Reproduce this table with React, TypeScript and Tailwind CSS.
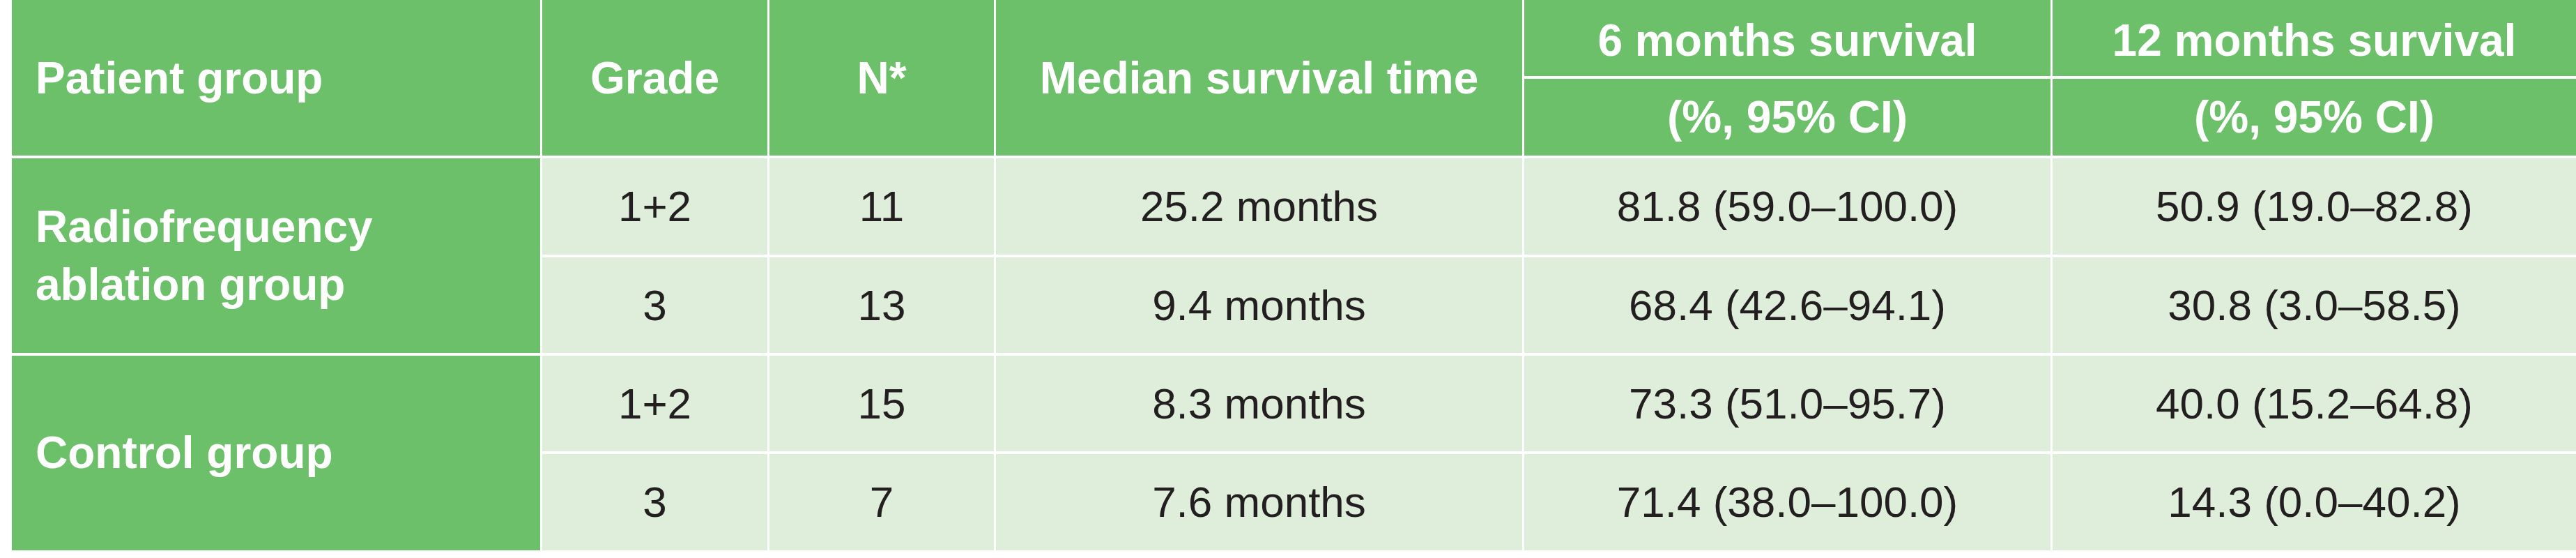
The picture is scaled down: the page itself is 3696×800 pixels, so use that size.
import React from "react";

const H = "bg-[#6cc06a] text-white font-bold flex items-center justify-center text-center";
const HL = "bg-[#6cc06a] text-white font-bold flex items-center pl-[34px]";
const B = "bg-[#dfeedb] text-[#231f20] flex items-center justify-center text-[62px]";

type Row = { grade: string; n: string; median: string; six: string; twelve: string };

const groups: { label: React.ReactNode; rows: Row[] }[] = [
  {
    label: (
      <>
        Radiofrequency
        <br />
        ablation group
      </>
    ),
    rows: [
      { grade: "1+2", n: "11", median: "25.2 months", six: "81.8 (59.0–100.0)", twelve: "50.9 (19.0–82.8)" },
      { grade: "3", n: "13", median: "9.4 months", six: "68.4 (42.6–94.1)", twelve: "30.8 (3.0–58.5)" },
    ],
  },
  {
    label: <>Control group</>,
    rows: [
      { grade: "1+2", n: "15", median: "8.3 months", six: "73.3 (51.0–95.7)", twelve: "40.0 (15.2–64.8)" },
      { grade: "3", n: "7", median: "7.6 months", six: "71.4 (38.0–100.0)", twelve: "14.3 (0.0–40.2)" },
    ],
  },
];

export default function App() {
  return (
    <div className="w-[3696px] h-[800px] bg-white font-['Liberation_Sans',Arial,sans-serif]">
      <div className="ml-[17px] grid bg-white gap-x-[3px] gap-y-[4px] grid-cols-[758px_323px_322px_755px_755px_751px] grid-rows-[109px_110px_138px_137px_137px_138px] text-[64px] leading-none">
        <div className={`${HL} row-span-2`}>Patient group</div>
        <div className={`${H} row-span-2`}>Grade</div>
        <div className={`${H} row-span-2`}>N*</div>
        <div className={`${H} row-span-2`}>Median survival time</div>
        <div className={`${H} pt-[6px]`}>6 months survival</div>
        <div className={`${H} pt-[6px]`}>12 months survival</div>
        <div className={`${H} col-start-5 row-start-2`}>(%, 95% CI)</div>
        <div className={`${H} col-start-6 row-start-2`}>(%, 95% CI)</div>

        {groups.map((g, gi) => (
          <React.Fragment key={gi}>
            <div className={`${HL} row-span-2 leading-[83px]`}>
              <div>{g.label}</div>
            </div>
            {g.rows.map((r, ri) => (
              <React.Fragment key={ri}>
                <div className={`${B} col-start-2`}>{r.grade}</div>
                <div className={B}>{r.n}</div>
                <div className={B}>{r.median}</div>
                <div className={B}>{r.six}</div>
                <div className={B}>{r.twelve}</div>
              </React.Fragment>
            ))}
          </React.Fragment>
        ))}
      </div>
    </div>
  );
}
